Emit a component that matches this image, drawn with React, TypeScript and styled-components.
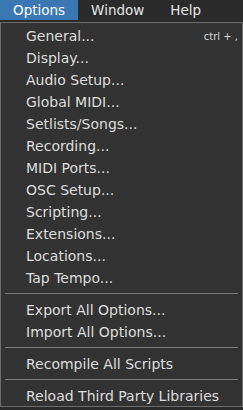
import styled, { createGlobalStyle } from 'styled-components';

const GlobalStyle = createGlobalStyle`
    html, body {
        margin: 0;
        padding: 0;
        background-color: #2b2b2b;
    }
    body {
        font-family: "DejaVu Sans", Verdana, sans-serif;
        color: #dcdcdc;
    }
`;

const Page = styled.div`
    width: 243px;
    height: 410px;
    background-color: #2b2b2b;
    overflow: hidden;
`;

const MenuBar = styled.div`
    display: flex;
    height: 22px;
`;

const MenuTitle = styled.div<{ $active?: boolean }>`
    height: 20px;
    line-height: 20px;
    padding: 0 13px;
    font-size: 13.5px;
    background-color: ${(p) => (p.$active ? '#3b78b3' : 'transparent')};
    color: ${(p) => (p.$active ? '#ffffff' : '#e6e6e6')};
`;

const Dropdown = styled.div`
    border: 1px solid #6c6c6c;
    background-color: #333333;
    padding: 1px 0;
    height: 385px;
    box-sizing: border-box;
`;

const Item = styled.div`
    display: flex;
    align-items: center;
    justify-content: space-between;
    height: 22px;
    padding: 2px 4px 0 25px;
    box-sizing: border-box;
    font-size: 14px;
    color: #dedede;
`;

const Shortcut = styled.span`
    font-size: 10px;
    color: #d8d8d8;
`;

const Separator = styled.div`
    height: 10px;
    padding: 5px 4px 4px;
    box-sizing: border-box;
    &::after {
        content: '';
        display: block;
        height: 1px;
        background-color: #7a7a7a;
    }
`;

type Entry = { label: string; shortcut?: string } | 'sep';

const entries: Entry[] = [
    { label: 'General...', shortcut: 'ctrl + ,' },
    { label: 'Display...' },
    { label: 'Audio Setup...' },
    { label: 'Global MIDI...' },
    { label: 'Setlists/Songs...' },
    { label: 'Recording...' },
    { label: 'MIDI Ports...' },
    { label: 'OSC Setup...' },
    { label: 'Scripting...' },
    { label: 'Extensions...' },
    { label: 'Locations...' },
    { label: 'Tap Tempo...' },
    'sep',
    { label: 'Export All Options...' },
    { label: 'Import All Options...' },
    'sep',
    { label: 'Recompile All Scripts' },
    'sep',
    { label: 'Reload Third Party Libraries' },
];

function App() {
    return (
        <Page>
            <GlobalStyle />
            <MenuBar>
                <MenuTitle $active>Options</MenuTitle>
                <MenuTitle>Window</MenuTitle>
                <MenuTitle>Help</MenuTitle>
            </MenuBar>
            <Dropdown>
                {entries.map((entry, i) =>
                    entry === 'sep' ? (
                        <Separator key={i} />
                    ) : (
                        <Item key={i}>
                            <span>{entry.label}</span>
                            {entry.shortcut && <Shortcut>{entry.shortcut}</Shortcut>}
                        </Item>
                    )
                )}
            </Dropdown>
        </Page>
    );
}

export default App;
